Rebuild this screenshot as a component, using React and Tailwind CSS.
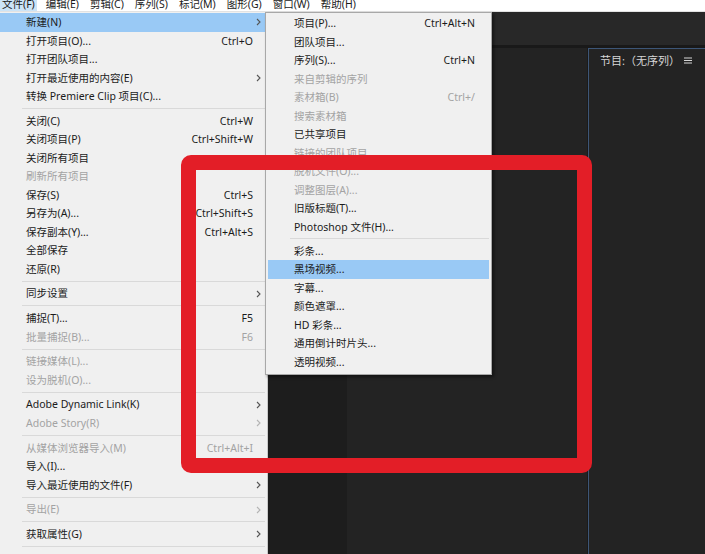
import React from "react";

const mainItems = [
  { label: "新建(N)", arrow: true, active: true },
  { label: "打开项目(O)...", shortcut: "Ctrl+O" },
  { label: "打开团队项目..." },
  { label: "打开最近使用的内容(E)", arrow: true },
  { label: "转换 Premiere Clip 项目(C)..." },
  "sep",
  { label: "关闭(C)", shortcut: "Ctrl+W" },
  { label: "关闭项目(P)", shortcut: "Ctrl+Shift+W" },
  { label: "关闭所有项目" },
  { label: "刷新所有项目", disabled: true },
  { label: "保存(S)", shortcut: "Ctrl+S" },
  { label: "另存为(A)...", shortcut: "Ctrl+Shift+S" },
  { label: "保存副本(Y)...", shortcut: "Ctrl+Alt+S" },
  { label: "全部保存" },
  { label: "还原(R)" },
  "sep",
  { label: "同步设置", arrow: true },
  "sep",
  { label: "捕捉(T)...", shortcut: "F5" },
  { label: "批量捕捉(B)...", shortcut: "F6", disabled: true },
  "sep",
  { label: "链接媒体(L)...", disabled: true },
  { label: "设为脱机(O)...", disabled: true },
  "sep",
  { label: "Adobe Dynamic Link(K)", arrow: true },
  { label: "Adobe Story(R)", arrow: true, disabled: true },
  "sep",
  { label: "从媒体浏览器导入(M)", shortcut: "Ctrl+Alt+I", disabled: true },
  { label: "导入(I)..." },
  { label: "导入最近使用的文件(F)", arrow: true },
  "sep",
  { label: "导出(E)", arrow: true, disabled: true },
  "sep",
  { label: "获取属性(G)", arrow: true },
  "sep",
  { label: "项目设置(P)", arrow: true },
];

const subItems = [
  { label: "项目(P)...", shortcut: "Ctrl+Alt+N" },
  { label: "团队项目..." },
  { label: "序列(S)...", shortcut: "Ctrl+N" },
  { label: "来自剪辑的序列", disabled: true },
  { label: "素材箱(B)", shortcut: "Ctrl+/", disabled: true },
  { label: "搜索素材箱", disabled: true },
  { label: "已共享项目" },
  { label: "链接的团队项目...", disabled: true },
  { label: "脱机文件(O)...", disabled: true },
  { label: "调整图层(A)...", disabled: true },
  { label: "旧版标题(T)..." },
  { label: "Photoshop 文件(H)..." },
  "sep",
  { label: "彩条..." },
  { label: "黑场视频...", active: true },
  { label: "字幕..." },
  { label: "颜色遮罩..." },
  { label: "HD 彩条..." },
  { label: "通用倒计时片头..." },
  { label: "透明视频..." },
];

const menuBar = ["文件(F)", "编辑(E)", "剪辑(C)", "序列(S)", "标记(M)", "图形(G)", "窗口(W)", "帮助(H)"];

function Chevron({ disabled }) {
  return (
    <svg width="5" height="8" viewBox="0 0 5 8">
      <path
        d="M1 1 L4 4 L1 7"
        fill="none"
        stroke={disabled ? "#b4b4b4" : "#555"}
        strokeWidth="1.1"
      />
    </svg>
  );
}

function Row({ item, box, slot }) {
  return (
    <div
      className={`flex items-center h-[18.5px] ${box} ${
        item.active ? "bg-[#99c9f5]" : ""
      } ${item.disabled ? "text-[#a3a3a3]" : "text-[#1b1b1b]"}`}
    >
      <span className="flex-1 whitespace-nowrap">{item.label}</span>
      {item.shortcut && <span className="whitespace-nowrap">{item.shortcut}</span>}
      <span className={`${slot} flex items-center`}>
        {item.arrow && <Chevron disabled={item.disabled} />}
      </span>
    </div>
  );
}

export default function App() {
  return (
    <div
      className="relative w-[705px] h-[554px] overflow-hidden bg-[#1e1e1e] text-[10.5px] leading-none"
      style={{ fontFamily: '"Noto Sans", "Noto Sans CJK SC", sans-serif' }}
    >
      {/* menu bar */}
      <div className="h-[12px] bg-white border-b border-[#e2e2e2] overflow-hidden">
        <div className="flex gap-[7px] -mt-[4px] text-[#1b1b1b]">
          {menuBar.map((m, i) => (
            <span
              key={m}
              className={`px-[2px] h-[16px] flex items-center whitespace-nowrap ${
                i === 0 ? "bg-[#cce4f7]" : ""
              }`}
            >
              {m}
            </span>
          ))}
        </div>
      </div>

      {/* dark workspace */}
      <div className="flex flex-col h-[542px]">
        <div className="h-[33px] bg-[#282828]" />
        <div className="h-[3px] bg-[#191919]" />
        <div className="flex flex-1">
          <div className="w-[347px] bg-[#1d1d1d]" />
          <div className="w-[240px] bg-[#232323]" />
          <div className="w-[1px] bg-[#1a1a1a]" />
          <div className="flex-1 bg-[#232323] border-l border-t border-[#3d5677] pl-[11px] pt-[6px]">
            <div className="flex items-center gap-[4px] text-[#d6d6d6] text-[11px] whitespace-nowrap">
              <span>节目:（无序列）</span>
              <svg width="8" height="7" viewBox="0 0 8 7">
                <path d="M0 1 H8 M0 3.5 H8 M0 6 H8" stroke="#d6d6d6" strokeWidth="1" />
              </svg>
            </div>
          </div>
        </div>
      </div>

      {/* file menu */}
      <div className="absolute left-0 top-[12px] w-[268px] h-[542px] bg-[#f0f0f0] border-r border-[#c9c9c9] pt-[1px]">
        {mainItems.map((item, i) =>
          item === "sep" ? (
            <div key={i} className="h-[6.2px] flex items-center ml-[22px] mr-[2px]">
              <div className="h-px w-full bg-[#d9d9d9]" />
            </div>
          ) : (
            <Row key={i} item={item} box="mr-[2px] pl-[26px]" slot="w-[12px] pl-[3px]" />
          )
        )}
      </div>

      {/* new submenu */}
      <div className="absolute left-[265px] top-[12px] w-[227px] bg-[#f0f0f0] border border-[#a8a8a8] shadow-[2px_2px_3px_rgba(0,0,0,0.45)] pt-[1px] pb-[3px]">
        {subItems.map((item, i) =>
          item === "sep" ? (
            <div key={i} className="h-[5.5px] flex items-center ml-[24px] mr-[2px]">
              <div className="h-px w-full bg-[#d9d9d9]" />
            </div>
          ) : (
            <Row key={i} item={item} box="mx-[2px] pl-[26px]" slot="w-[14px] pl-[5px]" />
          )
        )}
      </div>

      {/* red highlight frame */}
      <div className="absolute left-[181px] top-[155px] w-[411px] h-[318px] border-[15px] border-[#e31e27] rounded-[10px]" />
    </div>
  );
}
